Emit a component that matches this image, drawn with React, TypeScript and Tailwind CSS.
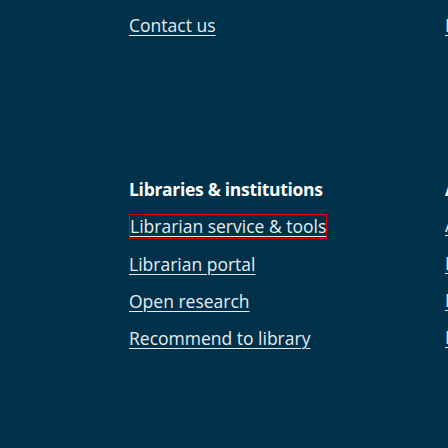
export default function App() {
  const font = { fontFamily: '"Open Sans", "Noto Sans", sans-serif' };
  return (
    <div
      className="h-screen w-full overflow-hidden bg-[#00314a] pl-[129px] text-[17.5px] text-[#e8ecef] flex"
      style={font}
    >
      <div className="w-[316px] shrink-0 pt-[13px]">
        <div className="leading-[24px]">
          <a href="#" className="underline underline-offset-[3px] decoration-1">Contact us</a>
        </div>
        <h3 className="mt-[140px] font-bold text-white leading-[24px] tracking-[-0.3px]">
          Libraries &amp; institutions
        </h3>
        <ul className="mt-[12px] flex flex-col gap-[13px]">
          <li>
            <a href="#" className="inline-block border border-[#e00000] leading-[23px] underline underline-offset-[3px] decoration-1">
              Librarian service &amp; tools
            </a>
          </li>
          <li className="leading-[24px]">
            <a href="#" className="underline underline-offset-[3px] decoration-1">Librarian portal</a>
          </li>
          <li className="leading-[24px]">
            <a href="#" className="underline underline-offset-[3px] decoration-1">Open research</a>
          </li>
          <li className="leading-[24px]">
            <a href="#" className="underline underline-offset-[3px] decoration-1">Recommend to library</a>
          </li>
        </ul>
      </div>
      <div className="w-[316px] shrink-0 pt-[13px]">
        <div className="leading-[24px]">
          <a href="#" className="underline underline-offset-[3px] decoration-1">Help and support</a>
        </div>
        <h3 className="mt-[140px] font-bold text-white leading-[24px]">Authors &amp; editors</h3>
        <ul className="mt-[12px] flex flex-col gap-[13px]">
          <li className="leading-[25px]">
            <a href="#" className="underline underline-offset-[3px] decoration-1">Authors</a>
          </li>
          <li className="leading-[24px]">
            <a href="#" className="underline underline-offset-[3px] decoration-1">Editors</a>
          </li>
          <li className="leading-[24px]">
            <a href="#" className="underline underline-offset-[3px] decoration-1">Reviewers</a>
          </li>
          <li className="leading-[24px]">
            <a href="#" className="underline underline-offset-[3px] decoration-1">Lifelong learners</a>
          </li>
        </ul>
      </div>
    </div>
  );
}
